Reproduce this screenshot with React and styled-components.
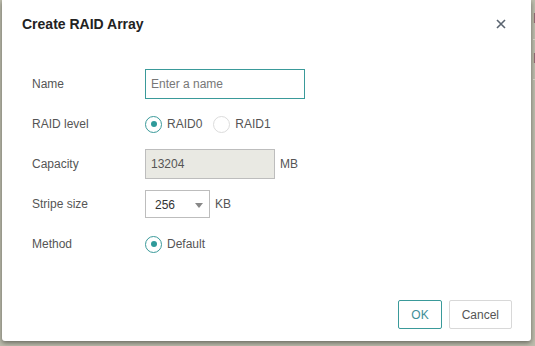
import React from "react";
import styled, { createGlobalStyle } from "styled-components";

const Global = createGlobalStyle`
  html, body { margin: 0; padding: 0; }
  body {
    background: #bdbdad;
    font-family: "Liberation Sans", Arial, sans-serif;
    width: 535px;
    height: 346px;
    overflow: hidden;
  }
`;

const Page = styled.div`
  display: flex;
  width: 535px;
  height: 346px;
  padding-left: 2px;
  box-sizing: border-box;
`;

const Dialog = styled.div`
  width: 529px;
  height: 341px;
  background: #fff;
  border-radius: 0 0 3px 3px;
  box-shadow: 0 2px 5px rgba(0, 0, 0, 0.45);
  display: flex;
  flex-direction: column;
  box-sizing: border-box;
`;

const Side = styled.div`
  flex: 1;
  overflow: hidden;
  display: flex;
  flex-direction: column;
  padding-left: 2px;
  font-size: 14px;
  color: #6a5a70;
`;

const SideItem = styled.div`
  height: 40px;
  line-height: 36px;
  border-bottom: 1px solid #cfcfc2;
  box-sizing: border-box;
`;

const Header = styled.div`
  display: flex;
  align-items: center;
  justify-content: space-between;
  height: 48px;
  padding: 0 24px 0 20px;
`;

const Title = styled.h1`
  margin: 0;
  font-size: 14px;
  font-weight: bold;
  color: #222;
`;

const Close = styled.button`
  border: none;
  background: none;
  padding: 0;
  width: 12px;
  height: 12px;
  display: flex;
  align-items: center;
  justify-content: center;
  cursor: pointer;
`;

const Body = styled.div`
  flex: 1;
  padding: 21px 30px 0 30px;
  display: flex;
  flex-direction: column;
  gap: 10px;
`;

const Row = styled.div`
  display: grid;
  grid-template-columns: 113px auto;
  align-items: center;
  height: 30px;
`;

const Label = styled.div`
  font-size: 12px;
  color: #555;
`;

const Field = styled.div`
  display: flex;
  align-items: center;
  gap: ${(p) => p.$gap || 5}px;
`;

const TextInput = styled.input`
  height: 30px;
  box-sizing: border-box;
  border: 1px solid ${(p) => (p.disabled ? "#bdbdbd" : "#3a9a9a")};
  background: ${(p) => (p.disabled ? "#e9e9e3" : "#fff")};
  width: ${(p) => p.$w}px;
  padding: 0 5px;
  font-family: inherit;
  font-size: 12px;
  color: #555;
  outline: none;
  &::placeholder { color: #777; }
  &:disabled { color: #555; }
`;

const Unit = styled.span`
  font-size: 12px;
  color: #555;
  align-self: ${(p) => (p.$top ? "flex-start" : "center")};
  margin-top: ${(p) => (p.$top ? 7 : 0)}px;
`;

const RadioWrap = styled.label`
  display: flex;
  align-items: center;
  gap: 5px;
  font-size: 12px;
  color: #555;
`;

const Circle = styled.span`
  width: 17px;
  height: 17px;
  box-sizing: border-box;
  border-radius: 50%;
  border: 1.5px solid ${(p) => (p.$on ? "#3a9a9a" : "#dcdcdc")};
  display: flex;
  align-items: center;
  justify-content: center;
  &::after {
    content: "";
    width: 6px;
    height: 6px;
    border-radius: 50%;
    background: ${(p) => (p.$on ? "#2f9a9a" : "transparent")};
  }
`;

const Select = styled.div`
  width: 65px;
  height: 28px;
  box-sizing: border-box;
  border: 1px solid #bdbdbd;
  display: flex;
  align-items: center;
  justify-content: space-between;
  padding: 2px 6px 0 9px;
  font-size: 12px;
  color: #333;
`;

const Arrow = styled.span`
  width: 0;
  height: 0;
  border-left: 4px solid transparent;
  border-right: 4px solid transparent;
  border-top: 5px solid #888;
`;

const Footer = styled.div`
  display: flex;
  justify-content: flex-end;
  gap: 7px;
  padding: 0 19px 12px 0;
`;

const Button = styled.button`
  height: 29px;
  padding: 0 ${(p) => p.$px}px;
  background: #fff;
  border: 1px solid ${(p) => (p.$primary ? "#3a9a9a" : "#d8d8d8")};
  color: ${(p) => (p.$primary ? "#3f8f99" : "#555")};
  font-family: inherit;
  font-size: 12px;
  border-radius: 2px;
  cursor: pointer;
`;

function Radio({ on, children }) {
  return (
    <RadioWrap>
      <Circle $on={on} />
      {children}
    </RadioWrap>
  );
}

export default function App() {
  return (
    <>
      <Global />
      <Page>
        <Dialog>
          <Header>
            <Title>Create RAID Array</Title>
            <Close aria-label="close">
              <svg width="10" height="10" viewBox="0 0 10 10">
                <path d="M1 1L9 9M9 1L1 9" stroke="#5a6470" strokeWidth="1.6" />
              </svg>
            </Close>
          </Header>
          <Body>
            <Row>
              <Label>Name</Label>
              <Field>
                <TextInput $w={160} placeholder="Enter a name" />
              </Field>
            </Row>
            <Row>
              <Label>RAID level</Label>
              <Field $gap={11}>
                <Radio on>RAID0</Radio>
                <Radio>RAID1</Radio>
              </Field>
            </Row>
            <Row>
              <Label>Capacity</Label>
              <Field>
                <TextInput $w={130} disabled value="13204" readOnly />
                <Unit>MB</Unit>
              </Field>
            </Row>
            <Row>
              <Label>Stripe size</Label>
              <Field>
                <Select>
                  256
                  <Arrow />
                </Select>
                <Unit $top>KB</Unit>
              </Field>
            </Row>
            <Row>
              <Label>Method</Label>
              <Field>
                <Radio on>Default</Radio>
              </Field>
            </Row>
          </Body>
          <Footer>
            <Button $primary $px={12}>OK</Button>
            <Button $px={12}>Cancel</Button>
          </Footer>
        </Dialog>
        <Side>
          <SideItem>E</SideItem>
          <SideItem>E</SideItem>
        </Side>
      </Page>
    </>
  );
}
